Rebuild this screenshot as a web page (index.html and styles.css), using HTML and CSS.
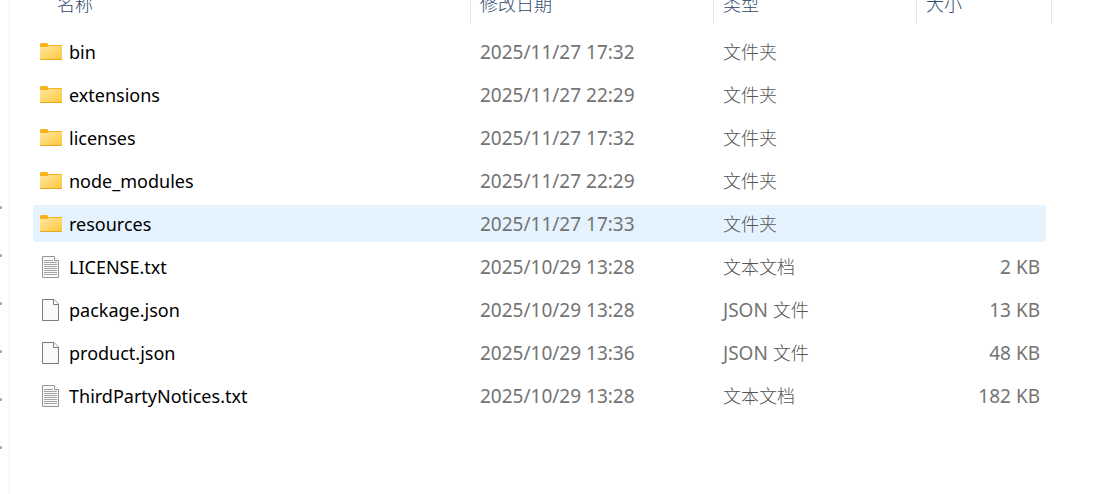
FILE: index.html
```
<!DOCTYPE html>
<html lang="zh-CN">
<head>
  <meta charset="UTF-8">
  <meta name="viewport" content="width=device-width, initial-scale=1.0">
  <title>文件列表</title>
  <link rel="stylesheet" href="styles.css">
</head>
<body>
<svg class="sprite" aria-hidden="true">
  <defs>
    <linearGradient id="folderFill" x1="0" y1="0" x2="1" y2="1">
      <stop offset="0" stop-color="#ffe8a0"/>
      <stop offset="1" stop-color="#fdc73c"/>
    </linearGradient>
    <symbol id="folder" viewBox="0 0 22 22">
      <path d="M0 3.5Q0 2 1.2 2H7.2Q8 2 8 3V4H22V10H0Z" fill="#f7b31b"/>
      <path d="M0 6H7.4L8.8 5H22V18.5H0Z" fill="url(#folderFill)"/>
      <path d="M0 18H22V18.5L21.5 19H.5L0 18.5Z" fill="#e9a820"/>
    </symbol>
    <symbol id="file" viewBox="0 0 22 22">
      <path d="M2.5 .5H14L18.5 5V21.5H2.5Z" fill="#fafafa" stroke="#7a7a7a"/>
      <path d="M13.5 .5V5.5H18.5" fill="#fff" stroke="#7a7a7a"/>
    </symbol>
    <symbol id="text" viewBox="0 0 22 22">
      <path d="M2.5 .5H14L18.5 5V21.5H2.5Z" fill="#fafafa" stroke="#969696"/>
      <path d="M14.5 .5V4.5H18.5" fill="#fff" stroke="#969696"/>
      <path d="M4 4.5H13M4 6.5H17M4 8.5H17M4 10.5H17M4 12.5H17M4 14.5H17M4 16.5H17M4 18.5H17" stroke="#a3a3a3"/>
    </symbol>
  </defs>
</svg>
<div class="window">
  <ul class="sidebar">
    <li></li>
    <li></li>
    <li></li>
    <li></li>
    <li></li>
    <li></li>
  </ul>
  <main class="content">
    <table class="files">
      <colgroup>
        <col>
        <col class="col-date">
        <col class="col-type">
        <col class="col-size">
        <col class="col-end">
      </colgroup>
      <thead>
        <tr>
          <th class="first"><div>名称</div></th>
          <th><div>修改日期</div></th>
          <th><div>类型</div></th>
          <th colspan="2"><div>大小</div></th>
        </tr>
      </thead>
      <tbody>
        <tr>
          <td class="name"><svg class="icon"><use href="#folder"/></svg>bin</td>
          <td class="date">2025/11/27 17:32</td>
          <td>文件夹</td>
          <td class="size"></td>
        </tr>
        <tr>
          <td class="name"><svg class="icon"><use href="#folder"/></svg>extensions</td>
          <td class="date">2025/11/27 22:29</td>
          <td>文件夹</td>
          <td class="size"></td>
        </tr>
        <tr>
          <td class="name"><svg class="icon"><use href="#folder"/></svg>licenses</td>
          <td class="date">2025/11/27 17:32</td>
          <td>文件夹</td>
          <td class="size"></td>
        </tr>
        <tr>
          <td class="name"><svg class="icon"><use href="#folder"/></svg>node_modules</td>
          <td class="date">2025/11/27 22:29</td>
          <td>文件夹</td>
          <td class="size"></td>
        </tr>
        <tr class="active">
          <td class="name"><svg class="icon"><use href="#folder"/></svg>resources</td>
          <td class="date">2025/11/27 17:33</td>
          <td>文件夹</td>
          <td class="size"></td>
        </tr>
        <tr>
          <td class="name"><svg class="icon"><use href="#text"/></svg>LICENSE.txt</td>
          <td class="date">2025/10/29 13:28</td>
          <td>文本文档</td>
          <td class="size">2 KB</td>
        </tr>
        <tr>
          <td class="name"><svg class="icon"><use href="#file"/></svg>package.json</td>
          <td class="date">2025/10/29 13:28</td>
          <td><span class="latin">JSON </span>文件</td>
          <td class="size">13 KB</td>
        </tr>
        <tr>
          <td class="name"><svg class="icon"><use href="#file"/></svg>product.json</td>
          <td class="date">2025/10/29 13:36</td>
          <td><span class="latin">JSON </span>文件</td>
          <td class="size">48 KB</td>
        </tr>
        <tr>
          <td class="name"><svg class="icon"><use href="#text"/></svg>ThirdPartyNotices.txt</td>
          <td class="date">2025/10/29 13:28</td>
          <td>文本文档</td>
          <td class="size">182 KB</td>
        </tr>
      </tbody>
    </table>
  </main>
</div>
</body>
</html>
```

FILE: styles.css
```
* {
  box-sizing: border-box;
}
body {
  margin: 0;
  font-family: "Noto Sans", "Noto Sans CJK SC", sans-serif;
  font-size: 18px;
  font-weight: 300;
  line-height: 24px;
  color: #555;
  background-color: #fff;
}
.sprite {
  position: absolute;
  width: 0;
  height: 0;
}
.window {
  display: flex;
  min-height: 100vh;
  overflow: hidden;
}

/* collapsed navigation pane */
.sidebar {
  flex: none;
  width: 10px;
  margin: 0;
  padding: 183px 0 0;
  list-style: none;
  border-right: 2px solid #f7f7f7;
}
.sidebar li {
  display: flex;
  align-items: center;
  height: 48px;
}
.sidebar li::before {
  content: "";
  width: 2px;
  height: 3px;
  background-color: #9aa5ae;
  border-radius: 0 2px 2px 0;
}

/* file list */
.content {
  flex: 1;
  min-width: 0;
  padding: 0 51px 0 23px;
}
.files {
  width: 100%;
  margin-top: -20px;
  table-layout: fixed;
  border-collapse: separate;
  border-spacing: 0 6px;
}
.col-date {
  width: 243px;
}
.col-type {
  width: 203px;
}
.col-size {
  width: 129px;
}
.col-end {
  width: 6px;
}
th {
  padding: 0 0 3px;
  font-weight: 300;
  text-align: left;
  color: #2f4a6b;
}
th div {
  height: 38px;
  padding: 6px 9px;
  border-right: 1px solid #e5e5e5;
}
th.first div {
  padding-left: 24px;
}
td {
  height: 37px;
  padding: 0 6px 0 9px;
  white-space: nowrap;
}
.name {
  padding-left: 7px;
  font-weight: 400;
  color: #000;
}
.date,
.size,
.latin {
  font-size: 19px;
  font-weight: 400;
  color: #737373;
}
.size {
  text-align: right;
}
.icon {
  width: 22px;
  height: 22px;
  margin-right: 7px;
  vertical-align: -4px;
}
.active td {
  background-color: #e5f3ff;
}
.active td:first-child {
  border-radius: 3px 0 0 3px;
}
.active td:last-child {
  border-radius: 0 3px 3px 0;
}
```
